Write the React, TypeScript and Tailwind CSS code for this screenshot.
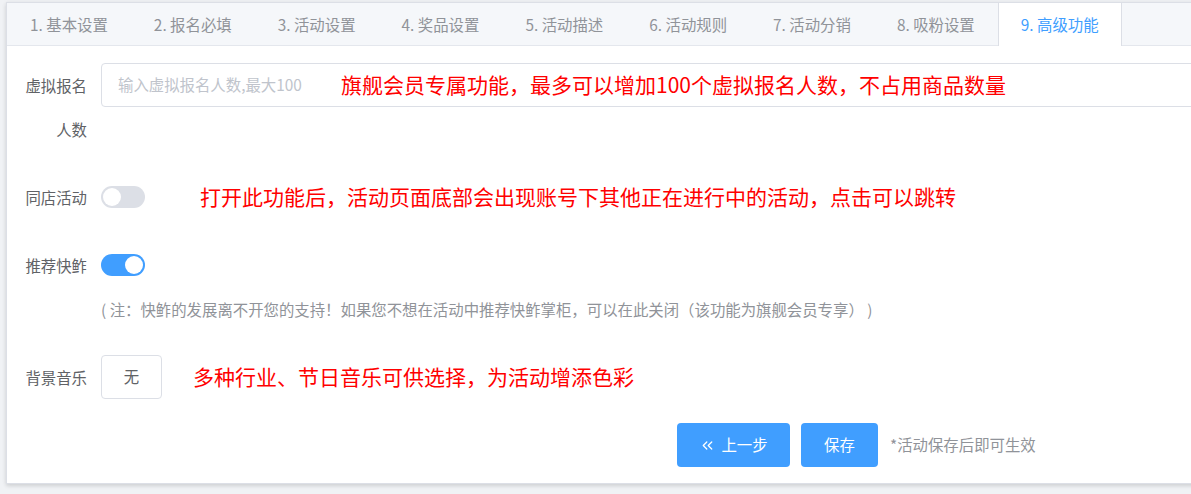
import React from 'react';
import { ChevronsLeft } from 'lucide-react';

const TABS = ['1. 基本设置', '2. 报名必填', '3. 活动设置', '4. 奖品设置', '5. 活动描述', '6. 活动规则', '7. 活动分销', '8. 吸粉设置', '9. 高级功能'];

const font = { fontFamily: '"Noto Sans CJK SC", "Noto Sans", sans-serif' };

const Label: React.FC<{ text: string }> = ({ text }) => (
  <label className="w-[80px] shrink-0 pr-[14px] text-right text-[15.4px] leading-[44px] text-[#606266]">{text}</label>
);

const Switch: React.FC<{ on?: boolean }> = ({ on }) => (
  <span
    className={`relative inline-block h-[22px] w-[44px] rounded-full ${on ? 'bg-[#409eff]' : 'bg-[#dcdfe6]'}`}
  >
    <span className={`absolute top-[2px] h-[18px] w-[18px] rounded-full bg-white ${on ? 'left-[24px]' : 'left-[2px]'}`} />
  </span>
);

const Note: React.FC<{ left: string; children: React.ReactNode }> = ({ left, children }) => (
  <span className={`absolute top-1/2 -translate-y-1/2 whitespace-nowrap text-[21px] text-[#ff0000] ${left}`}>
    {children}
  </span>
);

export default function App() {
  return (
    <div className="h-[494px] overflow-hidden bg-[#f0f2f5] pt-[2px] pl-[6px]" style={font}>
      <div className="w-[1220px] border border-[#dcdfe6] bg-white pb-[16px] shadow-[0_2px_4px_0_rgba(0,0,0,0.12),0_0_6px_0_rgba(0,0,0,0.04)]">
        {/* tabs */}
        <div className="flex h-[43px] border-b border-[#e4e7ed] bg-[#f5f7fa]">
          {TABS.map((t, i) => {
            const active = i === TABS.length - 1;
            return (
              <div
                key={t}
                className={`-mb-px flex h-[43px] items-center px-[22px] text-[15.4px] ${
                  active
                    ? 'border-x border-[#dcdfe6] bg-white text-[#409eff]'
                    : 'border-x border-transparent text-[#909399]'
                }`}
              >
                {t}
              </div>
            );
          })}
        </div>

        <div className="pl-[14px] pt-[17px]">
          {/* 虚拟报名人数 */}
          <div className="mb-[24px] flex">
            <Label text="虚拟报名人数" />
            <div className="relative h-[44px] flex-1">
              <div className="flex h-[44px] items-center rounded-[4px] border border-[#dcdfe6] pl-[16px] text-[15.4px] text-[#c0c4cc]">
                输入虚拟报名人数,最大100
              </div>
              <Note left="left-[240px]">旗舰会员专属功能，最多可以增加100个虚拟报名人数，不占用商品数量</Note>
            </div>
          </div>

          {/* 同店活动 */}
          <div className="mb-[24px] flex">
            <Label text="同店活动" />
            <div className="relative flex h-[44px] flex-1 items-center">
              <Switch />
              <Note left="left-[99px]">打开此功能后，活动页面底部会出现账号下其他正在进行中的活动，点击可以跳转</Note>
            </div>
          </div>

          {/* 推荐快鲊 */}
          <div className="mb-[24px] flex">
            <Label text="推荐快鲊" />
            <div className="flex-1">
              <div className="flex h-[44px] items-center">
                <Switch on />
              </div>
              <div className="text-[15.4px] leading-[44px] text-[#909399]">
                ( 注：快鲊的发展离不开您的支持！如果您不想在活动中推荐快鲊掌柜，可以在此关闭（该功能为旗舰会员专享） )
              </div>
            </div>
          </div>

          {/* 背景音乐 */}
          <div className="mb-[24px] flex">
            <Label text="背景音乐" />
            <div className="relative flex h-[44px] flex-1 items-center">
              <button className="h-[44px] w-[61px] rounded-[4px] border border-[#dcdfe6] bg-white text-[15.4px] text-[#606266]">
                无
              </button>
              <Note left="left-[92px]">多种行业、节日音乐可供选择，为活动增添色彩</Note>
            </div>
          </div>

          {/* actions */}
          <div className="flex items-center pl-[656px]">
            <button className="flex h-[44px] w-[113px] items-center justify-center gap-[5px] rounded-[4px] bg-[#409eff] text-[15.4px] text-white">
              <ChevronsLeft size={17} strokeWidth={1.8} />
              上一步
            </button>
            <button className="ml-[11px] h-[44px] w-[77px] rounded-[4px] bg-[#409eff] text-[15.4px] text-white">保存</button>
            <span className="ml-[12px] text-[15.4px] text-[#909399]">*活动保存后即可生效</span>
          </div>
        </div>
      </div>
    </div>
  );
}
